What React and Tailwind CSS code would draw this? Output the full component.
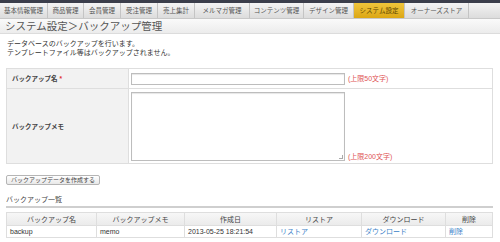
import React from 'react'

// ─── Data ────────────────────────────────────────────────────
const TABS = [
  { label: '基本情報管理', w: 'w-[48px]' },
  { label: '商品管理', w: 'w-[36px]' },
  { label: '会員管理', w: 'w-[37px]' },
  { label: '受注管理', w: 'w-[37px]' },
  { label: '売上集計', w: 'w-[37px]' },
  { label: 'メルマガ管理', w: 'w-[55px]' },
  { label: 'コンテンツ管理', w: 'w-[54px]' },
  { label: 'デザイン管理', w: 'w-[50px]' },
  { label: 'システム設定', w: 'w-[51px]', active: true },
  { label: 'オーナーズストア', w: 'w-[64px]' },
]

const COLS = [
  { label: 'バックアップ名', w: 'w-[90px]' },
  { label: 'バックアップメモ', w: 'w-[88px]' },
  { label: '作成日', w: 'w-[92px]' },
  { label: 'リストア', w: 'w-[85px]' },
  { label: 'ダウンロード', w: 'w-[84px]' },
  { label: '削除', w: 'flex-1' },
]

// ─── Sub-components ──────────────────────────────────────────

function NavBar() {
  return (
    <div className="flex h-[16px] bg-gradient-to-b from-[#f4f4f4] to-[#dcdcdc] border-b border-[#c8c8c8]">
      {TABS.map((t) => (
        <div
          key={t.label}
          className={`${t.w} shrink-0 flex items-center justify-center border-r border-[#c4c4c4] text-[6.5px] ${
            t.active
              ? 'bg-gradient-to-b from-[#f0c53a] to-[#dca712] text-[#5a4500]'
              : 'text-[#555]'
          }`}
        >
          {t.label}
        </div>
      ))}
    </div>
  )
}

function FormTable() {
  return (
    <div className="mx-[6px] w-[487px] border border-[#dedede]">
      <div className="flex h-[20px] border-b border-[#dedede]">
        <div className="w-[122px] shrink-0 bg-[#f2f2f2] border-r border-[#dedede] flex items-center pl-[5px] font-bold text-[6.5px] text-[#444]">
          バックアップ名<span className="text-[#e03030] ml-[2px]">*</span>
        </div>
        <div className="flex items-center pl-[2px] gap-[3px]">
          <div className="w-[214px] h-[12px] border border-[#bdbdbd] bg-white shadow-[inset_0_1px_1px_rgba(0,0,0,0.1)]" />
          <span className="text-[#e05555]">(上限50文字)</span>
        </div>
      </div>
      <div className="flex h-[74px]">
        <div className="w-[122px] shrink-0 bg-[#f2f2f2] border-r border-[#dedede] flex items-center pl-[5px] font-bold text-[6.5px] text-[#444]">
          バックアップメモ
        </div>
        <div className="flex items-end pl-[2px] pt-[2px] pb-[2px] gap-[3px]">
          <div className="relative w-[214px] h-[69px] border border-[#bdbdbd] bg-white shadow-[inset_0_1px_1px_rgba(0,0,0,0.1)]">
            <div className="absolute right-[1px] bottom-[1px] w-[4px] h-[4px] border-r border-b border-[#aaa]" />
          </div>
          <span className="text-[#e05555]">(上限200文字)</span>
        </div>
      </div>
    </div>
  )
}

function ListTable() {
  return (
    <div className="mx-[6px] w-[487px] border border-[#dedede]">
      <div className="flex h-[13px] bg-gradient-to-b from-[#f7f7f7] to-[#ebebeb] border-b border-[#dedede] text-[#444]">
        {COLS.map((c, i) => (
          <div
            key={c.label}
            className={`${c.w} shrink-0 flex items-center justify-center ${
              i < COLS.length - 1 ? 'border-r border-[#dedede]' : ''
            }`}
          >
            {c.label}
          </div>
        ))}
      </div>
      <div className="flex h-[11px] text-[#333]">
        <div className="w-[90px] shrink-0 border-r border-[#dedede] flex items-center pl-[3px]">backup</div>
        <div className="w-[88px] shrink-0 border-r border-[#dedede] flex items-center pl-[3px]">memo</div>
        <div className="w-[92px] shrink-0 border-r border-[#dedede] flex items-center pl-[3px]">2013-05-25 18:21:54</div>
        <div className="w-[85px] shrink-0 border-r border-[#dedede] flex items-center pl-[3px] text-[#3a7fc8]">リストア</div>
        <div className="w-[84px] shrink-0 border-r border-[#dedede] flex items-center pl-[3px] text-[#3a7fc8]">ダウンロード</div>
        <div className="flex-1 flex items-center pl-[3px] text-[#3a7fc8]">削除</div>
      </div>
    </div>
  )
}

// ─── Main page ───────────────────────────────────────────────

export default function App() {
  return (
    <div className="w-[500px] h-[242px] overflow-hidden bg-white font-['Liberation_Sans','Noto_Sans_CJK_JP',sans-serif] text-[7px] leading-[9px] text-[#333]">
      <div className="h-[3px] bg-[#3b3e4b]" />
      <NavBar />
      <div className="h-[15px] flex items-center pl-[5px] bg-gradient-to-b from-[#fafafa] to-[#ececec] border-b border-[#dcdcdc] text-[10.5px] leading-none text-[#555]">
        システム設定＞バックアップ管理
      </div>

      <div className="pl-[7px] pt-[5px] text-[#333]">
        <p>データベースのバックアップを行います。</p>
        <p>テンプレートファイル等はバックアップされません。</p>
      </div>

      <div className="mt-[11px]">
        <FormTable />
      </div>

      <div className="flex mx-[6px] mt-[11px]">
        <button className="h-[10px] px-[4px] rounded-[2px] border border-[#b5b5b5] bg-gradient-to-b from-white to-[#e8e8e8] text-[6px] leading-none text-[#444]">
          バックアップデータを作成する
        </button>
      </div>

      <div className="mx-[6px] mt-[10px] w-[487px] border-b-2 border-[#cfcfcf] pb-[2px] text-[#444]">
        バックアップ一覧
      </div>

      <div className="mt-[4px]">
        <ListTable />
      </div>
    </div>
  )
}
